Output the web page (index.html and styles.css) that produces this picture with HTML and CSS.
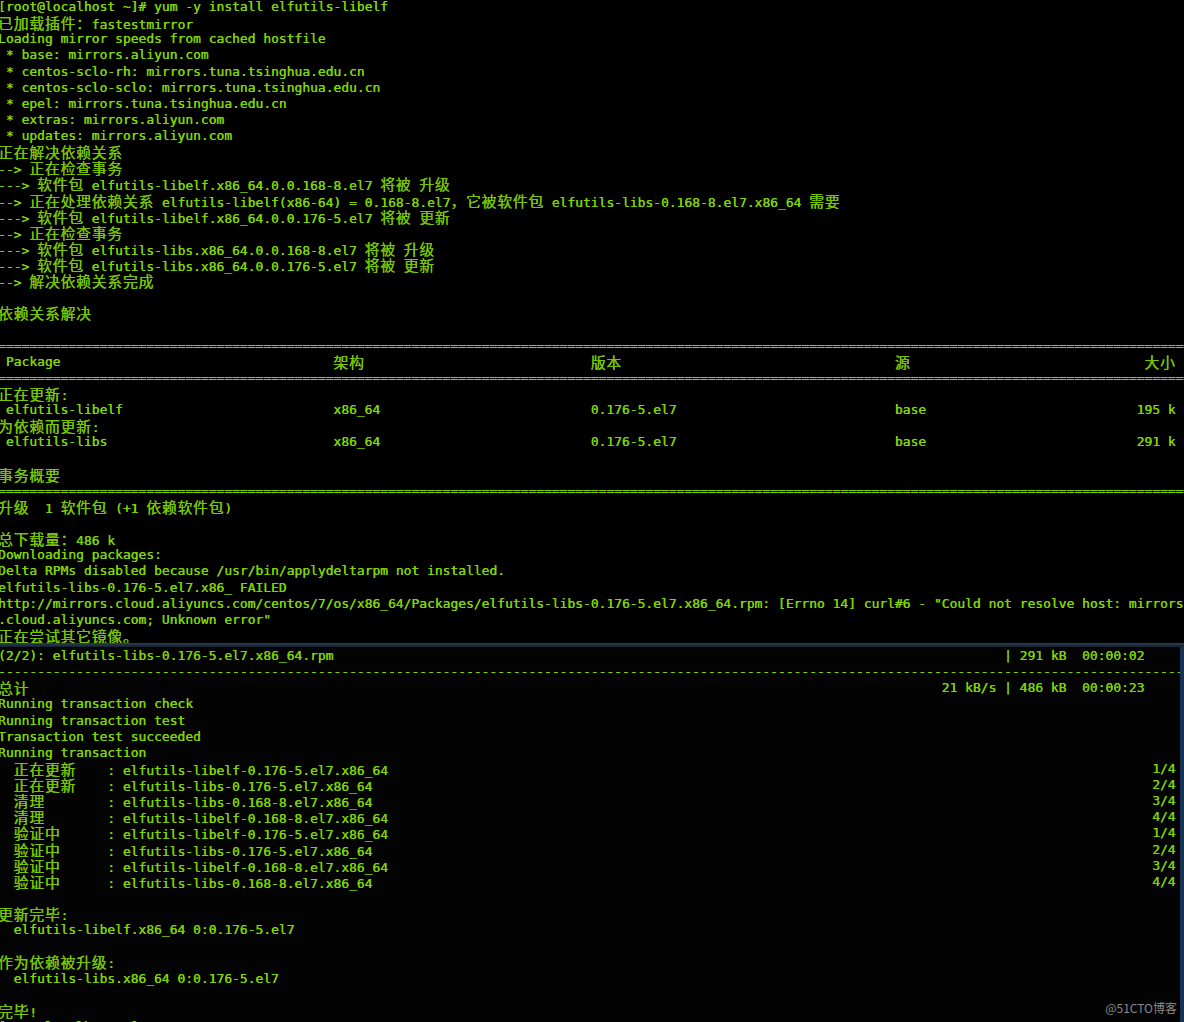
FILE: index.html
```html
<!DOCTYPE html>
<html lang="zh-CN">
<head>
    <meta charset="UTF-8">
    <meta name="viewport" content="width=device-width, initial-scale=1.0">
    <title>yum install elfutils-libelf</title>
    <link rel="stylesheet" href="styles.css">
</head>
<body>
    <!-- first capture: resolving dependencies -->
    <div class="shot-top term">
        <div class="ln">[root@localhost ~]# yum -y install elfutils-libelf</div>
        <div class="ln"><span class="cn">已加载插件：</span>fastestmirror</div>
        <div class="ln">Loading mirror speeds from cached hostfile</div>
        <div class="ln"> * base: mirrors.aliyun.com</div>
        <div class="ln"> * centos-sclo-rh: mirrors.tuna.tsinghua.edu.cn</div>
        <div class="ln"> * centos-sclo-sclo: mirrors.tuna.tsinghua.edu.cn</div>
        <div class="ln"> * epel: mirrors.tuna.tsinghua.edu.cn</div>
        <div class="ln"> * extras: mirrors.aliyun.com</div>
        <div class="ln"> * updates: mirrors.aliyun.com</div>
        <div class="ln"><span class="cn">正在解决依赖关系</span></div>
        <div class="ln">--&gt; <span class="cn">正在检查事务</span></div>
        <div class="ln">---&gt; <span class="cn">软件包</span> elfutils-libelf.x86_64.0.0.168-8.el7 <span class="cn">将被</span> <span class="cn">升级</span></div>
        <div class="ln">--&gt; <span class="cn">正在处理依赖关系</span> elfutils-libelf(x86-64) = 0.168-8.el7<span class="cn">，它被软件包</span> elfutils-libs-0.168-8.el7.x86_64 <span class="cn">需要</span></div>
        <div class="ln">---&gt; <span class="cn">软件包</span> elfutils-libelf.x86_64.0.0.176-5.el7 <span class="cn">将被</span> <span class="cn">更新</span></div>
        <div class="ln">--&gt; <span class="cn">正在检查事务</span></div>
        <div class="ln">---&gt; <span class="cn">软件包</span> elfutils-libs.x86_64.0.0.168-8.el7 <span class="cn">将被</span> <span class="cn">升级</span></div>
        <div class="ln">---&gt; <span class="cn">软件包</span> elfutils-libs.x86_64.0.0.176-5.el7 <span class="cn">将被</span> <span class="cn">更新</span></div>
        <div class="ln">--&gt; <span class="cn">解决依赖关系完成</span></div>
        <div class="ln"></div>
        <div class="ln"><span class="cn">依赖关系解决</span></div>
        <div class="ln"></div>
        <div class="ln">================================================================================================================================================================</div>
        <!-- package table -->
        <div class="ln row"><span class="c1"> Package</span><span class="c2"><span class="cn">架构</span></span><span class="c3"><span class="cn">版本</span></span><span class="c4"><span class="cn">源</span></span><span><span class="cn">大小</span></span></div>
        <div class="ln">================================================================================================================================================================</div>
        <div class="ln"><span class="cn">正在更新</span>:</div>
        <div class="ln row"><span class="c1"> elfutils-libelf</span><span class="c2">x86_64</span><span class="c3">0.176-5.el7</span><span class="c4">base</span><span>195 k</span></div>
        <div class="ln"><span class="cn">为依赖而更新</span>:</div>
        <div class="ln row"><span class="c1"> elfutils-libs</span><span class="c2">x86_64</span><span class="c3">0.176-5.el7</span><span class="c4">base</span><span>291 k</span></div>
        <div class="ln"></div>
        <div class="ln"><span class="cn">事务概要</span></div>
        <div class="ln">================================================================================================================================================================</div>
        <div class="ln"><span class="cn">升级</span>  1 <span class="cn">软件包</span> (+1 <span class="cn">依赖软件包</span>)</div>
        <div class="ln"></div>
        <div class="ln"><span class="cn">总下载量：</span>486 k</div>
        <div class="ln">Downloading packages:</div>
        <div class="ln">Delta RPMs disabled because /usr/bin/applydeltarpm not installed.</div>
        <div class="ln">elfutils-libs-0.176-5.el7.x86_ FAILED</div>
        <div class="ln">http://mirrors.cloud.aliyuncs.com/centos/7/os/x86_64/Packages/elfutils-libs-0.176-5.el7.x86_64.rpm: [Errno 14] curl#6 - "Could not resolve host: mirrors</div>
        <div class="ln">.cloud.aliyuncs.com; Unknown error"</div>
        <div class="ln"><span class="cn">正在尝试其它镜像。</span></div>
    </div>

    <div class="divider"></div>

    <!-- second capture: download and transaction -->
    <div class="shot-bottom term">
        <div class="ln split w147"><span>(2/2): elfutils-libs-0.176-5.el7.x86_64.rpm</span><span>| 291 kB  00:00:02</span></div>
        <div class="ln">----------------------------------------------------------------------------------------------------------------------------------------------------------------</div>
        <div class="ln split w147"><span class="cn">总计</span><span>21 kB/s | 486 kB  00:00:23</span></div>
        <div class="ln">Running transaction check</div>
        <div class="ln">Running transaction test</div>
        <div class="ln">Transaction test succeeded</div>
        <div class="ln">Running transaction</div>
        <div class="ln split w151"><span>  <span class="cn">正在更新</span>    : elfutils-libelf-0.176-5.el7.x86_64</span><span>1/4</span></div>
        <div class="ln split w151"><span>  <span class="cn">正在更新</span>    : elfutils-libs-0.176-5.el7.x86_64</span><span>2/4</span></div>
        <div class="ln split w151"><span>  <span class="cn">清理</span>        : elfutils-libs-0.168-8.el7.x86_64</span><span>3/4</span></div>
        <div class="ln split w151"><span>  <span class="cn">清理</span>        : elfutils-libelf-0.168-8.el7.x86_64</span><span>4/4</span></div>
        <div class="ln split w151"><span>  <span class="cn">验证中</span>      : elfutils-libelf-0.176-5.el7.x86_64</span><span>1/4</span></div>
        <div class="ln split w151"><span>  <span class="cn">验证中</span>      : elfutils-libs-0.176-5.el7.x86_64</span><span>2/4</span></div>
        <div class="ln split w151"><span>  <span class="cn">验证中</span>      : elfutils-libelf-0.168-8.el7.x86_64</span><span>3/4</span></div>
        <div class="ln split w151"><span>  <span class="cn">验证中</span>      : elfutils-libs-0.168-8.el7.x86_64</span><span>4/4</span></div>
        <div class="ln"></div>
        <div class="ln"><span class="cn">更新完毕</span>:</div>
        <div class="ln">  elfutils-libelf.x86_64 0:0.176-5.el7</div>
        <div class="ln"></div>
        <div class="ln"><span class="cn">作为依赖被升级</span>:</div>
        <div class="ln">  elfutils-libs.x86_64 0:0.176-5.el7</div>
        <div class="ln"></div>
        <div class="ln"><span class="cn">完毕</span>!</div>
        <div class="ln">[root@localhost ~]# </div>
    </div>

    <div class="watermark">@51CTO博客</div>
</body>
</html>
```

FILE: styles.css
```css
* {
    margin: 0;
    padding: 0;
    box-sizing: border-box;
}
html, body {
    height: 100%;
}
body {
    background-color: #000;
    overflow: hidden;
    position: relative;
}
.term {
    font-family: "DejaVu Sans Mono", monospace;
    font-size: 12.96px;
    line-height: 16.13px;
    color: #80d400;
    text-shadow: 0.35px 0 0 #80d400;
}
.ln {
    height: 16.13px;
    margin-left: -2px;
    white-space: pre;
}
.cn {
    font-family: "Noto Sans CJK SC", sans-serif;
    font-size: 14.8px;
    letter-spacing: 0.8px;
    color: #78c400;
}

/* two captures glued together */
.shot-top {
    height: 644px;
    margin-top: -1px;
    overflow: hidden;
}
.divider {
    height: 4px;
    background: linear-gradient(#2c3f54, #14212f);
}
.shot-bottom {
    height: 375px;
    padding-top: 1px;
    border-right: 4px solid #173253;
    background-color: #030303;
    overflow: hidden;
}

/* table columns */
.row {
    display: flex;
    width: 151ch;
}
.c1 {
    width: 43ch;
}
.c2 {
    width: 33ch;
}
.c3 {
    width: 39ch;
}
.c4 {
    flex: 1;
}
.split {
    display: flex;
    justify-content: space-between;
}
.w147 {
    width: 147ch;
}
.w151 {
    width: 151ch;
}

.watermark {
    position: absolute;
    right: 7px;
    bottom: 6px;
    font-family: "Noto Sans CJK SC", sans-serif;
    font-size: 12px;
    line-height: 16px;
    color: #8a8a8a;
}
```
